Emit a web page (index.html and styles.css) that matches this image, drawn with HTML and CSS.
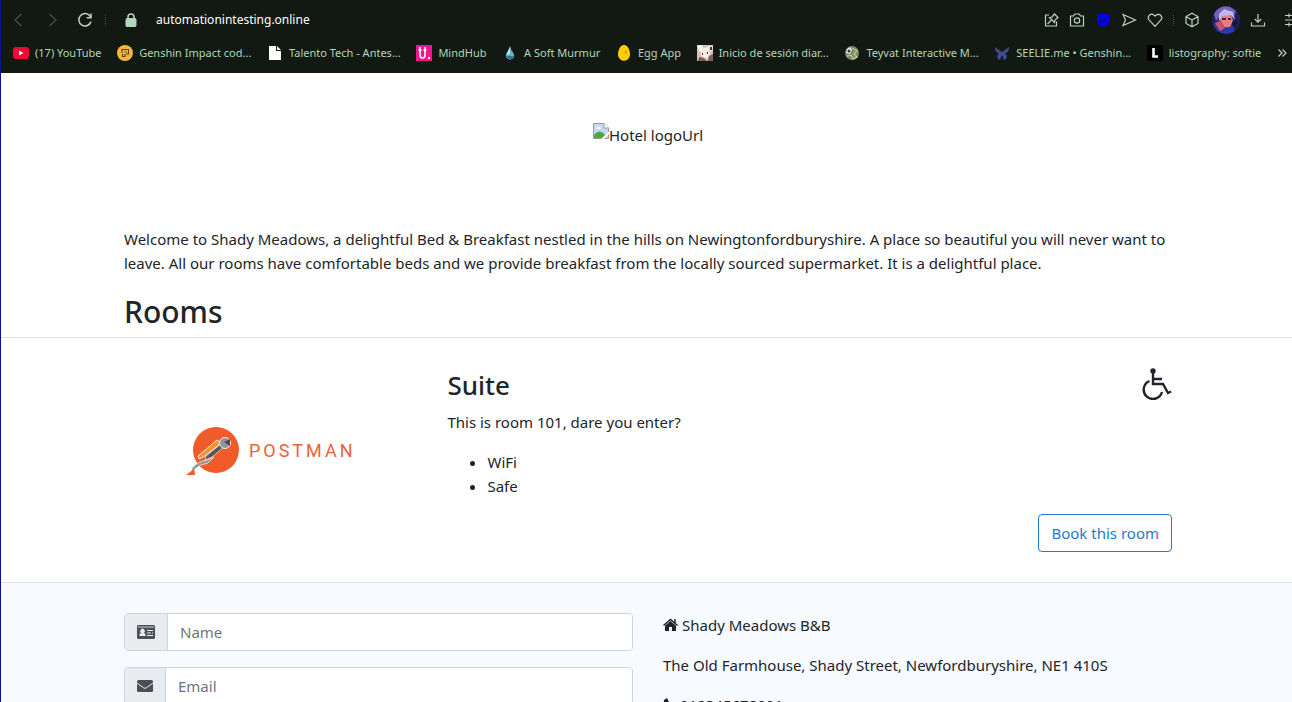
FILE: index.html
```html
<!DOCTYPE html>
<html lang="en">
<head>
<meta charset="utf-8">
<title>Restful-booker-platform demo</title>
<link rel="stylesheet" href="styles.css">
</head>
<body>
<header class="browser">
  <div class="toolbar">
    <button class="tool dim" aria-label="Back"><svg width="16" height="16" viewBox="0 0 16 16"><path d="M10.5 2 4 8l6.500 6"/></svg></button>
    <button class="tool dim" aria-label="Forward"><svg width="16" height="16" viewBox="0 0 16 16"><path d="M5.500 2 12 8l-6.500 6"/></svg></button>
    <button class="tool reload" aria-label="Reload"><svg width="16" height="16" viewBox="0 0 16 16"><path d="M13.300 4.500A6.200 6.200 0 1 0 14 9.500M14 1.500v4.200H9.700"/></svg></button>
    <span class="dots"></span>
    <svg class="lock" width="12" height="14" viewBox="0 0 12 14"><path d="M3 6V4a3 3 0 0 1 6 0v2"/><rect x="1" y="5.500" width="10" height="8" rx="1"/></svg>
    <span class="address">automationintesting.online</span>
    <div class="actions">
      <button class="tool" aria-label="Pin"><svg width="16" height="16" viewBox="0 0 16 16"><path d="M6 3H2.500v11h11V9.500M9 5l2.500-3L15 5.500 12 8l-.5 2.500-5-5zM8.500 8 4.500 12"/></svg></button>
      <button class="tool" aria-label="Snapshot"><svg width="16" height="16" viewBox="0 0 16 16"><path d="M1.500 4h3l1.300-2h4.400l1.300 2h3v10h-13z"/><circle cx="8" cy="8.500" r="2.700"/></svg></button>
      <button class="tool" aria-label="Shield"><svg width="16" height="16" viewBox="0 0 16 16"><path d="M8 1c2 1.200 4 1.500 6 1.500V9c0 3-3 5-6 6-3-1-6-3-6-6V2.500C4 2.500 6 2.200 8 1z" fill="#0000f5" stroke="none"/><path d="M5 8l2.200 2L11 6" stroke="#11172f"/></svg></button>
      <button class="tool" aria-label="Send"><svg width="16" height="16" viewBox="0 0 16 16"><path d="M2 2.500 14.500 8 2 13.500 4.500 8z"/></svg></button>
      <button class="tool" aria-label="Favourite"><svg width="16" height="16" viewBox="0 0 16 16"><path d="M8 14.300 2.300 8.200C-.5 5 3.500-.5 8 4c4.500-4.500 8.500 1 5.700 4.200z"/></svg></button>
      <span class="dots"></span>
      <button class="tool" aria-label="Extensions"><svg width="16" height="16" viewBox="0 0 16 16"><path d="M8 1.300 14 4.500v7L8 14.700 2 11.500v-7zM2 4.500 8 8l6-3.500M8 8v6.700"/></svg></button>
      <button class="tool avatar" aria-label="Profile"><svg width="28" height="28" viewBox="0 0 28 28"><circle cx="14" cy="14" r="14" fill="#202060" stroke="none"/><g stroke="none"><path d="M2 8Q8-2 18 1l6 4-2 5-12-2-6 7z" fill="#7960ba"/><path d="M8 8l10-2 3 8-3 8-7-1-4-6z" fill="#e88078"/><path d="M7 8l5-5 9 3 2 8-4-5-9 1-3 5z" fill="#c1b8ee"/><path d="M10 12h4v2h-4zm6 0h3v2h-3z" fill="#352360"/><path d="M1 18l7-4 5 8 8-2 2 5q-9 6-18 0z" fill="#2936ad"/><path d="M3 17l5-2 5 7-5 3z" fill="#cb546a"/><path d="M20 17l6-4-2 9z" fill="#0e163c"/></g></svg></button>
      <button class="tool" aria-label="Downloads"><svg width="16" height="16" viewBox="0 0 16 16"><path d="M8 2v8M4.800 7 8 10.200 11.200 7M1.500 10.500V14h13v-3.500"/></svg></button>
      <button class="tool menu" aria-label="Menu"><svg width="16" height="16" viewBox="0 0 16 16"><path d="M1 3.500h14M1 8h14M1 12.500h14M5 1.500v4M10 6v4M5 10.500v4"/></svg></button>
    </div>
  </div>
  <nav class="bookmarks">
    <a href="#"><svg width="16" height="16" viewBox="0 0 16 16"><rect y="2" width="16" height="12" rx="3" fill="#f40736"/><path d="M6 5.500v5L10.500 8z" fill="#fff"/></svg>(17) YouTube</a>
    <a href="#"><svg width="16" height="16" viewBox="0 0 16 16"><circle cx="8" cy="8" r="8" fill="#f1b73a"/><path d="M5 8V4.500h6.500V9H9M5.500 12V9M7.500 7h2M5.500 11.500H8V9" fill="none" stroke="#5a471e" stroke-width="1.200"/></svg>Genshin Impact cod...</a>
    <a href="#"><svg width="16" height="16" viewBox="0 0 16 16"><path d="M2 1h7v5h5v9H2zM10 1l4 4h-4z" fill="#fff"/></svg>Talento Tech - Antes...</a>
    <a href="#"><svg width="16" height="16" viewBox="0 0 16 16"><path d="M0 0h16v16H0z" fill="#ee168f"/><path d="M4 2v8q0 3 2.500 3T9 10V2M2.500 5h3M7.500 5h3" fill="none" stroke="#fff" stroke-width="1.600"/><path d="M12 12h2v2h-2z" fill="#fff"/></svg>MindHub</a>
    <a href="#"><svg width="16" height="16" viewBox="0 0 16 16"><path d="M8 1q1 4 3 6.500c3 4-.5 7-3 7s-6-3-3-7Q7 5 8 1z" fill="#65aec9"/><path d="M8 2v7l-3 1q0-3 3-8z" fill="#bce1ec"/><path d="M4.500 11h7q-1 3-3.500 3t-3.500-3z" fill="#287491"/></svg>A Soft Murmur</a>
    <a href="#"><svg width="16" height="16" viewBox="0 0 16 16"><path d="M8 0c3.500 0 6 5 6 9 0 9-12 9-12 0 0-4 2.500-9 6-9z" fill="#fc0"/><path d="M10 5v4M8 7h3" stroke="#d29a00" fill="none"/></svg>Egg App</a>
    <a href="#"><svg width="16" height="16" viewBox="0 0 16 16"><path d="M0 0h16v16H0z" fill="#d4c4be"/><path d="M4 4l7-2 2 7-4 5-5-4z" fill="#fff0e8"/><path d="M0 1l5-1 1 3-3 4zM11 1l5 1-2 5z" fill="#f6f4fb"/><path d="M5 8h1v2H5zm5-1h1v2h-1zM13 2h2v3h-2z" fill="#363955"/><path d="M2 12l5 1 3 3H1zM12 11l4-2v7h-5z" fill="#805e58"/></svg>Inicio de sesión diar...</a>
    <a href="#"><svg width="16" height="16" viewBox="0 0 16 16"><circle cx="8" cy="8" r="7" fill="#6c8c73"/><path d="M3 4l3-2 2 3-2 4-4-1z" fill="#e2eee5"/><path d="M8 3l5 3-3 3 3 3-4 2-2-4-4 1" fill="none" stroke="#cdc275" stroke-width="1.400"/><circle cx="5" cy="6" r="1.500" fill="#263f36"/></svg>Teyvat Interactive M...</a>
    <a href="#"><svg width="16" height="16" viewBox="0 0 16 16"><path d="M8 7 1 2q0 6 4 6-3 3-1 6l2 1 2-5 2 5 2-1q2-3-1-6 4 0 4-6z" fill="#414b91"/></svg>SEELIE.me • Genshin...</a>
    <a href="#"><svg width="16" height="16" viewBox="0 0 16 16"><rect width="16" height="16" rx="2" fill="#000"/><path d="M6.500 3v8.500H11" fill="none" stroke="#fff" stroke-width="2.600"/></svg>listography: softie</a>
    <button class="more" aria-label="More bookmarks"><svg width="10" height="10" viewBox="0 0 10 10"><path d="M1.500 1.500 5 5 1.500 8.500M5.500 1.500 9 5 5.500 8.500"/></svg></button>
  </nav>
</header>
<main class="page">
  <div class="hero">
    <svg width="16" height="16" viewBox="0 0 16 16"><path d="M.5.500H11L15.500 5v10.500H.5z" fill="#c6d7f4" stroke="#9b9b9b"/><path d="M11 .5V5h4.500" fill="#fff" stroke="#9b9b9b"/><path d="M3 6q0-2 2-2 2-1 3 2z" fill="#fff"/><path d="M1 15v-3q5-6 9-2l2 2-3 3z" fill="#4ea83c"/><path d="M8.500 16 16 8.500V11l-5 5z" fill="#fff"/></svg><span>Hotel logoUrl</span>
  </div>
  <section class="intro">
    <p>Welcome to Shady Meadows, a delightful Bed &amp; Breakfast nestled in the hills on Newingtonfordburyshire. A place so beautiful you will never want to leave. All our rooms have comfortable beds and we provide breakfast from the locally sourced supermarket. It is a delightful place.</p>
    <h2>Rooms</h2>
  </section>
  <section class="room">
    <div class="picture">
      <svg width="58" height="52" viewBox="0 0 58 52">
        <circle cx="30" cy="25" r="23" fill="#f15a29"/>
        <path d="M12 31 31 15l4 3-16 13-6 3z" fill="#f7942a" stroke="#f6efe8"/>
        <path d="M20 31 35 19l3 3-12 10-7 3z" fill="#55565a" stroke="#f6efe8" stroke-width=".7"/>
        <path d="M6 43q6-7 15-8l7-3-6 6q-7 1-13 6l-1 5-2-3z" fill="#9a9a9c" stroke="#f6efe8" stroke-width=".7"/>
        <circle cx="39" cy="18" r="5.500" fill="#939598" stroke="#eee"/>
        <path d="M38 17l6-3v7z" fill="#4b4c50"/>
        <path d="M0 50 8 44l1 6z" fill="#f15a29"/>
      </svg>
      <span class="wordmark">POSTMAN</span>
    </div>
    <div class="details">
      <div class="room-head">
        <h3>Suite</h3>
        <svg class="wheelchair" width="30" height="32" viewBox="0 0 30 32"><circle cx="11" cy="3" r="2.700"/><path d="M11 4v12h10l5 9 3-1.500M11 11h9M7.500 13A9.300 9.300 0 1 0 20 24" /></svg>
      </div>
      <p>This is room 101, dare you enter?</p>
      <ul><li>WiFi</li><li>Safe</li></ul>
      <button class="book">Book this room</button>
    </div>
  </section>
  <section class="contact">
    <form>
      <div class="field">
        <label for="name" aria-label="Name"><svg width="18" height="14" viewBox="0 0 18 14"><rect width="18" height="14" rx="1.500" fill="#495057"/><path d="M1 2h16" stroke="#e9ecef" stroke-width=".8"/><path d="M2.500 11V9l2-1a2.200 2.200 0 1 1 2 0l2 1v2zM10 5h6v1h-6zm0 2.500h4v1h-4zm5 0h1v1h-1zM10 10h6v1h-6z" fill="#e9ecef"/></svg></label>
        <input id="name" type="text" placeholder="Name">
      </div>
      <div class="field">
        <label for="email" aria-label="Email"><svg width="16" height="14" viewBox="0 0 16 14"><rect y="1" width="16" height="12" rx="1.500" fill="#495057"/><path d="M0 4l6.500 4.800q1.500 1 3 0L16 4" fill="none" stroke="#e9ecef"/></svg></label>
        <input id="email" type="email" placeholder="Email">
      </div>
    </form>
    <address>
      <p><svg width="15" height="14" viewBox="0 0 15 14"><path d="M7.500 3 13 7.700V13H9V9H6v4H2V7.700z"/><path d="M.5 7.500l7-6 7 6M12 1v4" fill="none" stroke="#212529" stroke-width="1.500"/></svg>Shady Meadows B&amp;B</p>
      <p>The Old Farmhouse, Shady Street, Newfordburyshire, NE1 410S</p>
      <p><svg width="13" height="14" viewBox="0 0 13 14"><path d="M1 2 4 0l2 4-2 2q1 2 3 3l2-2 4 2-2 4C6 14 0 8 1 2z"/></svg>012345678901</p>
    </address>
  </section>
</main>
</body>
</html>
```
FILE: styles.css
```css
* { box-sizing: border-box; }
body {
  margin: 0;
  height: 100vh;
  overflow: hidden;
  background: #fff;
  color: #212529;
  font: 15px/24px "Noto Sans", "Open Sans", sans-serif;
}
p, h2, h3, ul { margin: 0; }
button { font: inherit; cursor: pointer; }
svg { flex: none; }

.browser {
  background: #111912;
  border-left: 1px solid #0a1390;
  color: #b5d6b7;
  font-size: 12px;
  line-height: 16px;
}
.toolbar {
  display: flex;
  align-items: center;
  height: 40px;
  padding-left: 10px;
}
.tool {
  display: flex;
  padding: 0;
  border: 0;
  background: none;
  color: #b9d1bd;
}
.tool svg, .more svg {
  fill: none;
  stroke: currentColor;
  stroke-width: 1.2;
}
.dim { margin-right: 17px; color: #46534a; }
.reload svg { stroke-width: 1.5; }
.dots {
  height: 11px;
  margin: 0 12px;
  border-left: 1px dotted #435146;
}
.lock {
  margin: 0 19px 0 7px;
  fill: #b5d6bd;
  stroke: #b5d6bd;
}
.lock path { fill: none; stroke-width: 1.5; }
.address { color: #fff; }
.actions {
  display: flex;
  align-items: center;
  gap: 10px;
  margin-left: auto;
  margin-right: -8px;
}
.actions .dots { margin: 0; }
.avatar { margin-left: 2px; }
.avatar svg { stroke: none; }
.menu { margin-left: 8px; }
.bookmarks {
  display: flex;
  align-items: center;
  justify-content: space-between;
  height: 33px;
  padding: 0 5px 8px 12px;
  font-size: 11px;
}
.bookmarks a {
  display: flex;
  align-items: center;
  gap: 6px;
  color: inherit;
  text-decoration: none;
  white-space: nowrap;
}
.more {
  display: flex;
  padding: 0;
  border: 0;
  background: none;
  color: #b5d6b7;
}

.page { border-left: 1px solid #0a1390; }
.hero {
  display: flex;
  justify-content: center;
  height: 154px;
  padding: 50px 0 0 3px;
}
.intro {
  padding: 0 120px 6px 123px;
}
h2 {
  margin-top: 18px;
  font-size: 30px;
  font-weight: 500;
  line-height: 38px;
}
.room {
  display: grid;
  grid-template-columns: 28% 1fr;
  gap: 30px;
  padding: 30px 120px 30px 123px;
  border-top: 1px solid #dee2e6;
  border-bottom: 1px solid #dee2e6;
}
.picture {
  display: flex;
  align-items: center;
  justify-content: center;
  gap: 5px;
  height: 166px;
}
.wordmark {
  color: #e8633a;
  font: 18px/24px "Roboto", sans-serif;
  letter-spacing: 3px;
}
.details { display: flex; flex-direction: column; }
.room-head { display: flex; justify-content: space-between; }
h3 {
  margin: 0 0 8px;
  font-size: 26px;
  font-weight: 500;
  line-height: 34px;
}
.wheelchair { fill: #212529; }
.wheelchair path { fill: none; stroke: #212529; stroke-width: 2.4; }
ul { margin: 16px 0; padding-left: 40px; }
.book {
  align-self: flex-end;
  padding: 6px 12px;
  border: 1px solid #2878d0;
  border-radius: 4px;
  background: #fff;
  color: #2878d0;
}
.contact {
  display: grid;
  grid-template-columns: 1fr 1fr;
  gap: 30px;
  padding: 30px 120px 30px 123px;
  background: #f7faff;
}
.field {
  display: flex;
  height: 38px;
  margin-bottom: 16px;
  border: 1px solid #ced4da;
  border-radius: 4px;
  overflow: hidden;
}
.field label {
  display: flex;
  align-items: center;
  padding: 0 12px;
  border-right: 1px solid #ced4da;
  background: #e9ecef;
}
.field input {
  flex: 1;
  min-width: 0;
  padding: 0 12px;
  border: 0;
  background: #fff;
  font: inherit;
}
.field input::placeholder { color: #6c757d; opacity: 1; }
address { font-style: normal; }
address p {
  display: flex;
  align-items: center;
  gap: 4px;
  margin-bottom: 16px;
}
address svg { fill: #212529; }
```
